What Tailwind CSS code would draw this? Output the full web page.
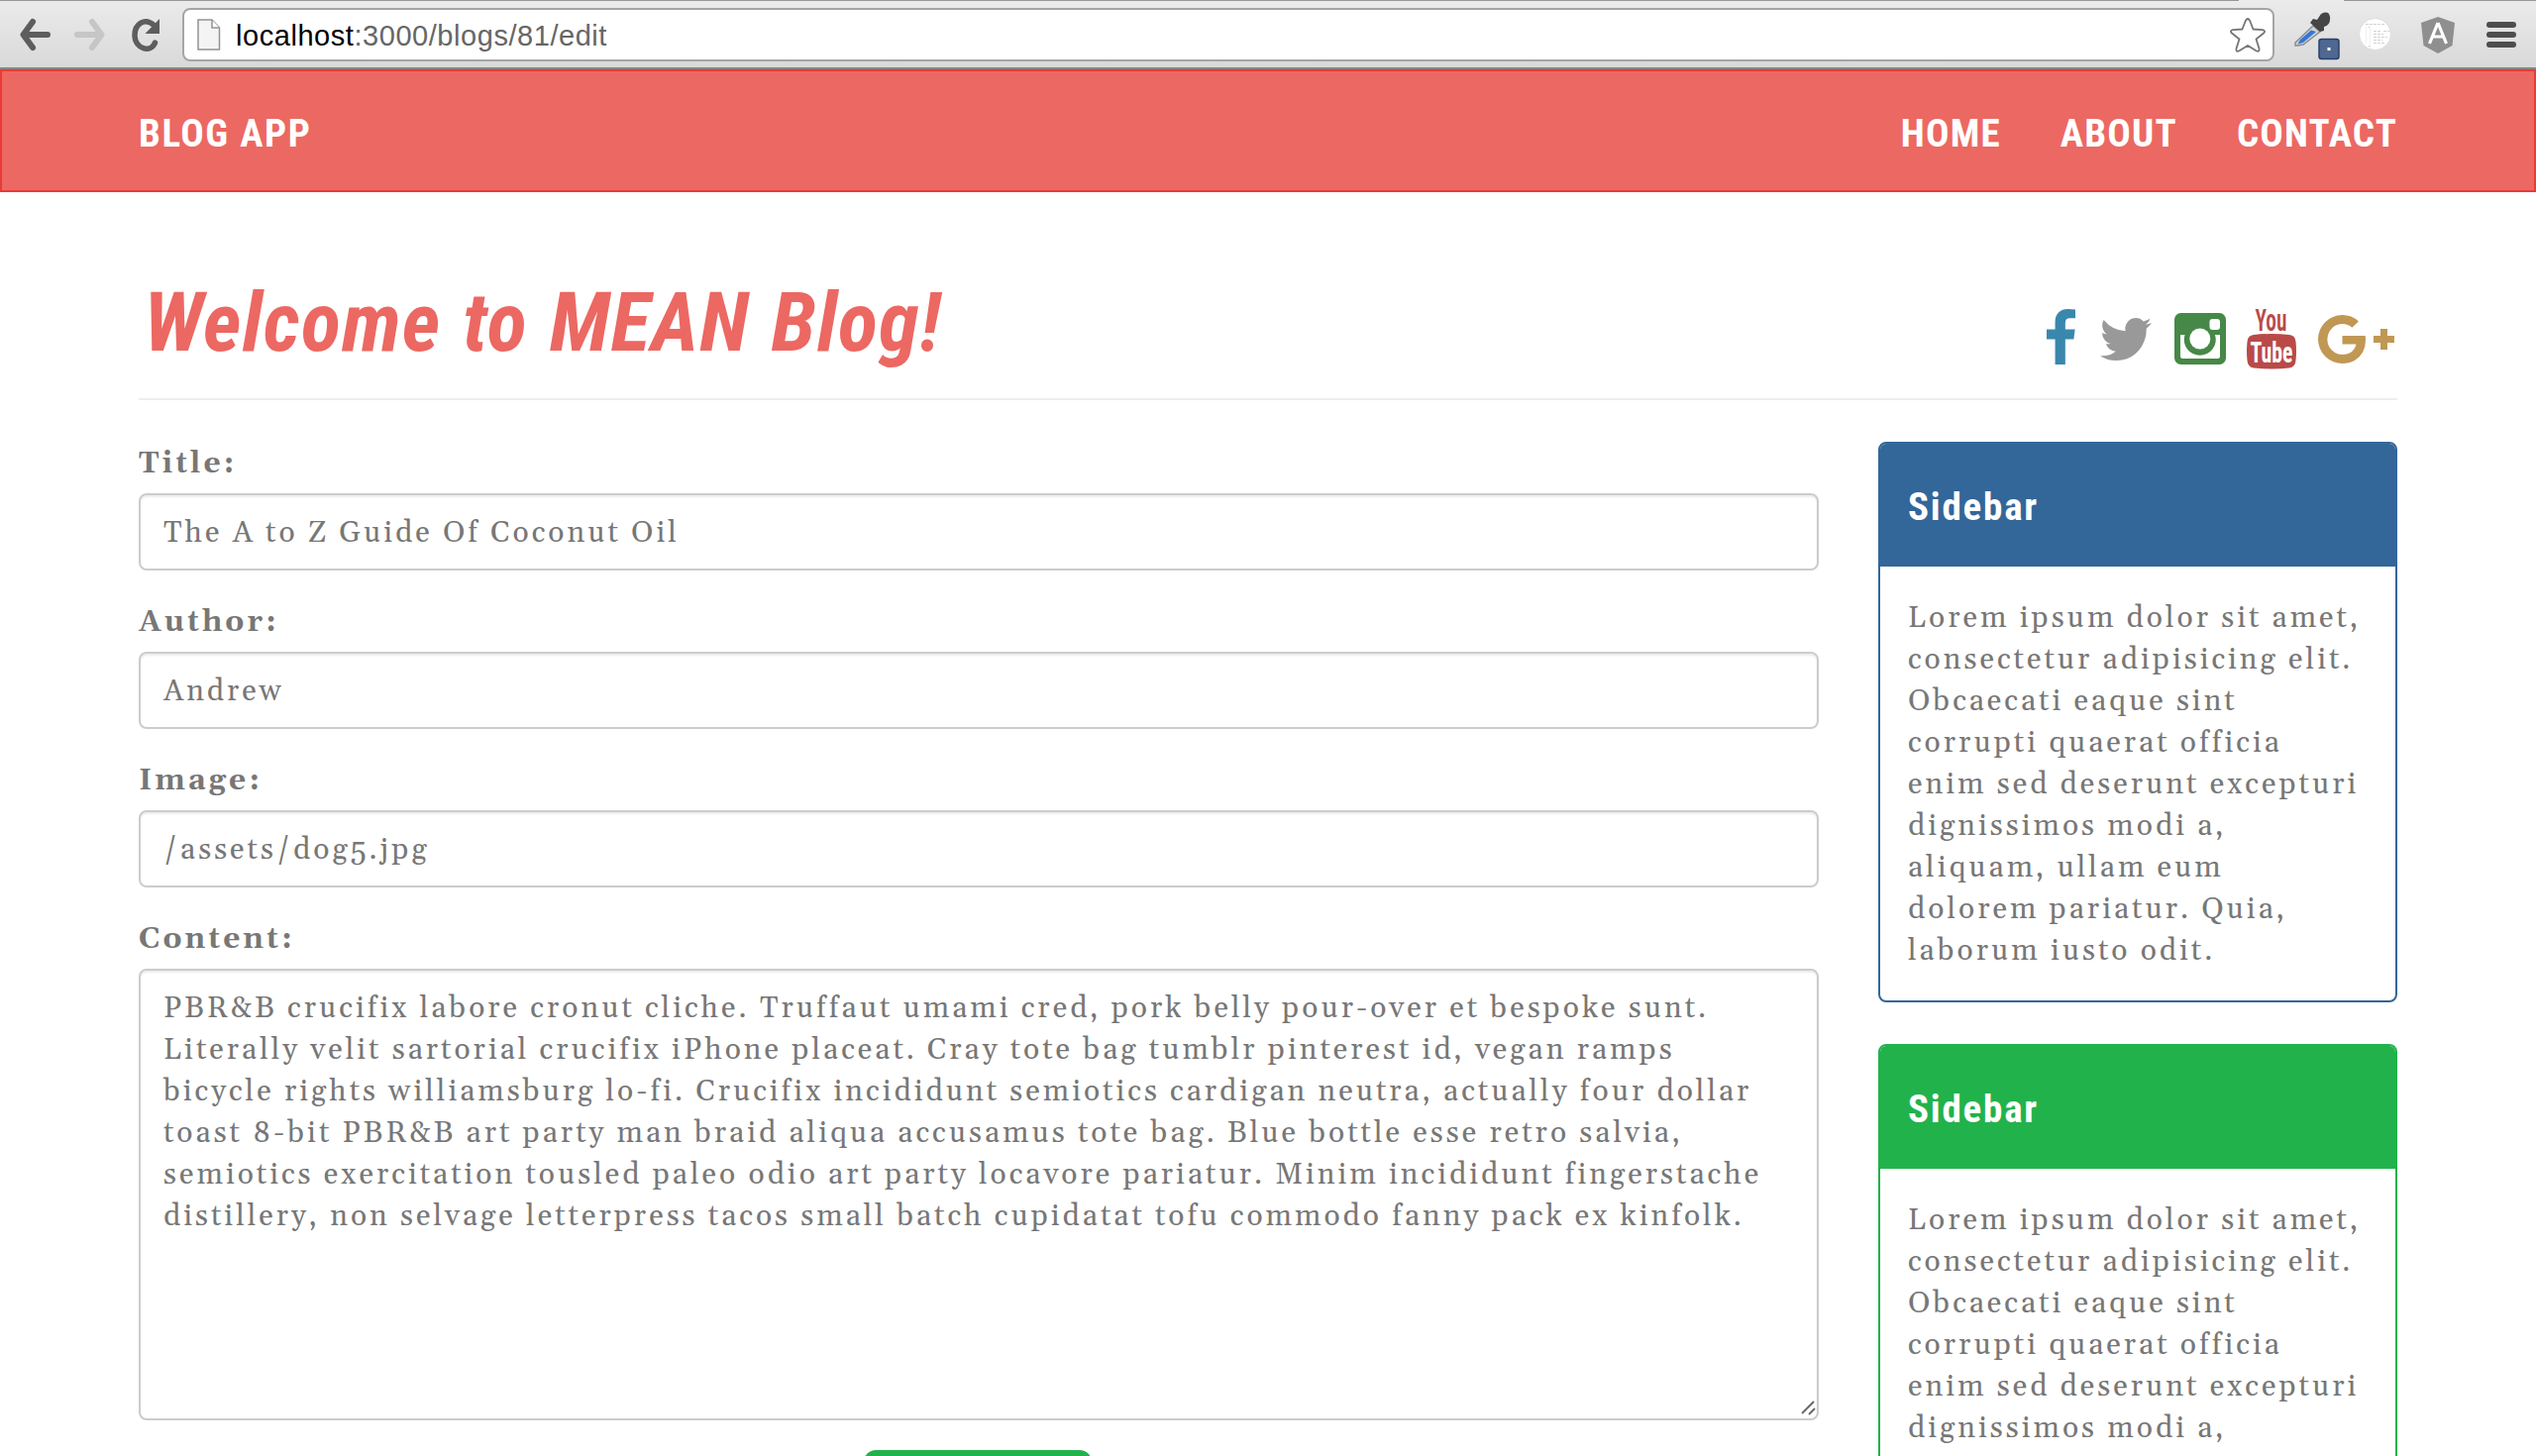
<!DOCTYPE html>
<html lang="en">
<head>
<meta charset="utf-8">
<title>Blog App</title>
<script src="https://cdn.jsdelivr.net/npm/@tailwindcss/browser@4"></script>
</head>
<body class="w-[2560px] h-[1470px] overflow-hidden bg-white font-[Gelasio,Georgia,'Liberation_Serif',serif] text-[30px] leading-[42px] tracking-[3px] text-[#777]">

<!-- Browser toolbar -->
<div class="relative flex h-[70px] w-full items-center border-b-2 border-b-[#868686] bg-linear-to-b from-[#ebebeb] to-[#d9d9d9]">
  <div class="absolute left-0 top-0 h-px w-[2260px] bg-[#979797]"></div>
  <div class="absolute right-0 top-0 h-px w-[194px] bg-[#979797]"></div>
  <svg class="ml-5 mt-0.5 h-[34px] w-[31px] shrink-0" viewBox="0 0 31 34" fill="none" stroke="#5d5d5d" stroke-width="6" stroke-linecap="round" stroke-linejoin="round"><path d="M28 17H6M13 4 3.500 17 13 30"/></svg>
  <svg class="ml-6 mt-0.5 h-[34px] w-[31px] shrink-0" viewBox="0 0 31 34" fill="none" stroke="#c6c6c6" stroke-width="6" stroke-linecap="round" stroke-linejoin="round"><path d="M3 17H25M18 4 27.500 17 18 30"/></svg>
  <svg class="ml-[27px] mt-0.5 h-[35px] w-[29px] shrink-0" viewBox="0 0 29 35"><path d="M22.500 7.500C13 -1 3 6.500 3 17.500C3 31.500 19.500 36 23.500 25" fill="none" stroke="#5d5d5d" stroke-width="5.500" stroke-linecap="round"/><path d="M28 1V16H13.500Z" fill="#5d5d5d"/></svg>
  <div class="ml-[22px] mt-0.5 flex h-[54px] w-[2112px] shrink-0 items-center rounded-lg border-2 border-[#a5a5a5] bg-white pl-[13px] pr-[7px]">
    <svg class="h-[33px] w-[24px] shrink-0" viewBox="0 0 24 33"><path d="M1 1H15L22.500 9V31H1Z" fill="#f4f4f4" stroke="#929292" stroke-width="1.500"/><path d="M15 1V9H22.500" fill="#fff" stroke="#929292" stroke-width="1.500"/></svg>
    <div class="ml-[15px] flex-1 pt-px font-['Liberation_Sans',Arial,sans-serif] text-[29px] leading-[40px] tracking-[0.55px] text-[#666]"><span class="text-black">localhost</span>:3000/blogs/81/edit</div>
    <svg class="h-[35px] w-[36px] shrink-0" viewBox="0 0 36 35" fill="none" stroke="#757575" stroke-width="1.800" stroke-linejoin="round"><path d="M15.800 3Q18 -1 20.200 3L23.500 11.500L33 12.200Q36.500 13 34 15.500L26.500 21.500L29.500 31Q30 35 26.500 33.300L18 28L9.500 33.300Q6 35 6.500 31L9.500 21.500L2 15.500Q-.500 13 3 12.200L12.500 11.500Z"/></svg>
  </div>
  <svg class="ml-5 mt-1 h-[50px] w-[46px] shrink-0" viewBox="0 -2 46 50"><path d="M1 33V30L19 13L26 19L9 32L3 33Z" fill="#cfd3da" stroke="#8d8d8d" stroke-width="1.500"/><path d="M3.500 31.500L6 27L17 17.500L22 19L9 30Z" fill="#3575d6"/><path d="M16 10L19 6L23 7L27 1Q35 -3 36 4Q37 12 30 14L30 18L26 19Z" fill="#454545"/><rect x="25" y="26.500" width="20" height="20" rx="2.500" fill="#4f6892" stroke="#2a406c" stroke-width="1.500"/><rect x="33.500" y="35" width="3" height="3" fill="#fff"/></svg>
  <svg class="ml-[19px] mt-px h-[33px] w-[33px] shrink-0" viewBox="0 0 33 33"><circle cx="16.500" cy="16.500" r="16" fill="#fff" stroke="#dcdcdc"/><path d="M7 6.500H27M10 9.500H12M15 13.500H23M25 13.500H31M15 16.500H25M15 19.500H29M15 22.500H24M15 25.500H27M10 28.500H12" stroke="#d2d2d2" stroke-width="1" stroke-dasharray="3 1"/><path d="M7.500 9V25M11.500 9V27" stroke="#f0f0f0"/></svg>
  <svg class="ml-[30px] mt-0.5 h-[37px] w-[34px] shrink-0" viewBox="0 0 34 37"><path d="M17 0L34 6L31.500 29L17 37L2.500 29L0 6Z" fill="#8f8f8f"/><path d="M17 6L8.500 27M17 6L25.500 27M12 20H22" fill="none" stroke="#fff" stroke-width="3.200"/></svg>
  <div class="ml-8 mt-0.5 flex w-[30px] shrink-0 flex-col gap-1"><i class="h-1.5 rounded-full bg-[#4d4d4d]"></i><i class="h-1.5 rounded-full bg-[#4d4d4d]"></i><i class="h-1.5 rounded-full bg-[#4d4d4d]"></i></div>
</div>

<!-- Site navigation -->
<nav class="flex h-[124px] items-center justify-between border-2 border-[#e93a34] bg-[#ec6862] px-[138px] font-['Roboto_Condensed',Roboto,sans-serif] text-[39px] font-bold leading-[50px] tracking-[1.2px] text-white">
  <a class="mt-1.5 tracking-[1.5px]">BLOG APP</a>
  <div class="mt-1.5 flex gap-[60px]"><a>HOME</a><a>ABOUT</a><a>CONTACT</a></div>
</nav>

<main class="mx-[140px]">
  <header class="flex h-[210px] items-start justify-between border-b-2 border-[#eee]">
    <h1 class="ml-[5px] mt-[82px] font-['Roboto_Condensed',Roboto,sans-serif] text-[83px] font-bold italic leading-[100px] tracking-[1px] text-[#ec6862] [word-spacing:2px]">Welcome to MEAN Blog!</h1>
    <div class="mr-[3px] mt-[118px] flex items-start">
      <svg class="h-[56px] w-[29px]" viewBox="479 0 864 1664"><path fill="#3a87ad" d="M1343 12v264h-157q-86 0-116 36t-30 108v189h293l-39 296h-254v759h-306v-759h-255v-296h255v-218q0-186 104-288.500t277-102.500q147 0 228 12z"/></svg>
      <svg class="ml-[25px] mt-[9px] h-[43px] w-[52px]" viewBox="108 256 1576 1280" preserveAspectRatio="none"><path fill="#999" d="M1684 408q-67 98-162 167 1 14 1 42 0 130-38 259.500t-115.500 248.500-184.500 210.500-258 146-323 54.500q-271 0-496-145 35 4 78 4 225 0 401-138-105-2-188-64.500t-114-159.500q33 5 61 5 43 0 85-11-112-23-185.500-111.500t-73.500-205.500v-4q68 38 146 41-66-44-105-115t-39-154q0-88 44-163 121 149 294.500 238.500t371.500 99.500q-8-38-8-74 0-134 94.500-228.500t228.500-94.500q140 0 236 102 109-21 205-78-37 115-142 178 93-10 186-50z"/></svg>
      <svg class="ml-[23px] mt-1 h-[52px] w-[52px]" viewBox="0 0 52 52"><rect width="52" height="52" rx="6.500" fill="#468847"/><path d="M6 22H10.500A16 16 0 1 0 41 22H46V43.500Q46 46 43.500 46H8.500Q6 46 6 43.500Z" fill="#fff"/><circle cx="25.800" cy="26" r="10.500" fill="#fff"/><rect x="35.500" y="6" width="10.500" height="11" rx="3" fill="#fff"/></svg>
      <svg class="ml-[21px] h-[61px] w-[50px] overflow-visible font-['Roboto_Condensed',Roboto,sans-serif] tracking-normal" viewBox="0 0 50 61"><text x="8.500" y="22.300" font-size="31" font-weight="600" fill="#b94a48" textLength="32" lengthAdjust="spacingAndGlyphs">You</text><path d="M7 26Q25 24 43 26Q49 26.500 49.500 33Q50.500 43 49.500 52Q49 58.500 43 59.500Q25 61.500 7 59.500Q1 58.500 .500 52Q-.500 43 .500 33Q1 26.500 7 26Z" fill="#b94a48"/><text x="3.500" y="53.500" font-size="30" font-weight="700" fill="#fff" textLength="43" lengthAdjust="spacingAndGlyphs">Tube</text></svg>
      <svg class="ml-[22px] mt-[6px] h-[49px] w-[77px]" viewBox="0 163 2304 1466" preserveAspectRatio="none"><path fill="#c09853" d="M1437 913q0 208-87 370.500t-248 254-369 91.500q-149 0-285-58t-234-156-156-234-58-285 58-285 156-234 234-156 285-58q286 0 491 192l-199 191q-117-113-292-113-123 0-227.500 62.500t-165.500 169.500-61 233 61 233 165.500 169.500 227.500 62.500q83 0 152.500-23t114.500-57.500 78.500-78.500 49-83 21.500-74h-416v-252h692q12 63 12 122zm867-122v210h-209v210h-210v-210h-210v-210h210v-210h210v210h209z"/></svg>
    </div>
  </header>

  <div class="mt-[42px] flex items-start justify-between">
    <form class="w-[1696px]">
      <label class="block h-[52px] pt-px font-bold">Title:</label>
      <input value="The A to Z Guide Of Coconut Oil" class="block h-[78px] w-full rounded-lg border-2 border-[#ccc] px-[23px] pt-0.5 shadow-[inset_0_2px_2px_rgba(0,0,0,0.075)]">
      <label class="mt-[30px] block h-[52px] pt-px font-bold">Author:</label>
      <input value="Andrew" class="block h-[78px] w-full rounded-lg border-2 border-[#ccc] px-[23px] pt-0.5 shadow-[inset_0_2px_2px_rgba(0,0,0,0.075)]">
      <label class="mt-[30px] block h-[52px] pt-px font-bold">Image:</label>
      <input value="/assets/dog5.jpg" class="block h-[78px] w-full rounded-lg border-2 border-[#ccc] px-[23px] pt-0.5 shadow-[inset_0_2px_2px_rgba(0,0,0,0.075)]">
      <label class="mt-[30px] block h-[52px] pt-px font-bold">Content:</label>
      <div class="relative">
        <textarea class="block h-[456px] w-full resize-none overflow-hidden whitespace-pre rounded-lg border-2 border-[#ccc] px-[23px] py-[17px] shadow-[inset_0_2px_2px_rgba(0,0,0,0.075)]">PBR&amp;B crucifix labore cronut cliche. Truffaut umami cred, pork belly pour-over et bespoke sunt.
Literally velit sartorial crucifix iPhone placeat. Cray tote bag tumblr pinterest id, vegan ramps
bicycle rights williamsburg lo-fi. Crucifix incididunt semiotics cardigan neutra, actually four dollar
toast 8-bit PBR&amp;B art party man braid aliqua accusamus tote bag. Blue bottle esse retro salvia,
semiotics exercitation tousled paleo odio art party locavore pariatur. Minim incididunt fingerstache
distillery, non selvage letterpress tacos small batch cupidatat tofu commodo fanny pack ex kinfolk.</textarea>
        <svg class="absolute bottom-[5px] right-[3px] h-4 w-4" viewBox="0 0 16 16" stroke="#666" stroke-width="1.800"><path d="M2 14L14 2M9 15L15 9"/></svg>
      </div>
      <div class="mx-auto mt-[30px] h-[68px] w-[230px] -translate-x-px rounded-xl bg-[#22b24c]"></div>
    </form>

    <aside class="w-[524px]">
      <section class="h-[566px] rounded-lg border-2 border-[#336699] bg-white">
        <h3 class="h-[124px] rounded-t-md bg-[#336699] pl-7 pt-[39px] font-['Roboto_Condensed',Roboto,sans-serif] text-[39px] font-bold leading-[50px] tracking-[1.8px] text-white">Sidebar</h3>
        <p class="whitespace-pre pl-7 pt-[31px]">Lorem ipsum dolor sit amet,
consectetur adipisicing elit.
Obcaecati eaque sint
corrupti quaerat officia
enim sed deserunt excepturi
dignissimos modi a,
aliquam, ullam eum
dolorem pariatur. Quia,
laborum iusto odit.</p>
      </section>
      <section class="mt-[42px] h-[566px] rounded-lg border-2 border-[#22b24c] bg-white">
        <h3 class="h-[124px] rounded-t-md bg-[#22b24c] pl-7 pt-[39px] font-['Roboto_Condensed',Roboto,sans-serif] text-[39px] font-bold leading-[50px] tracking-[1.8px] text-white">Sidebar</h3>
        <p class="whitespace-pre pl-7 pt-[31px]">Lorem ipsum dolor sit amet,
consectetur adipisicing elit.
Obcaecati eaque sint
corrupti quaerat officia
enim sed deserunt excepturi
dignissimos modi a,</p>
      </section>
    </aside>
  </div>
</main>
</body>
</html>
